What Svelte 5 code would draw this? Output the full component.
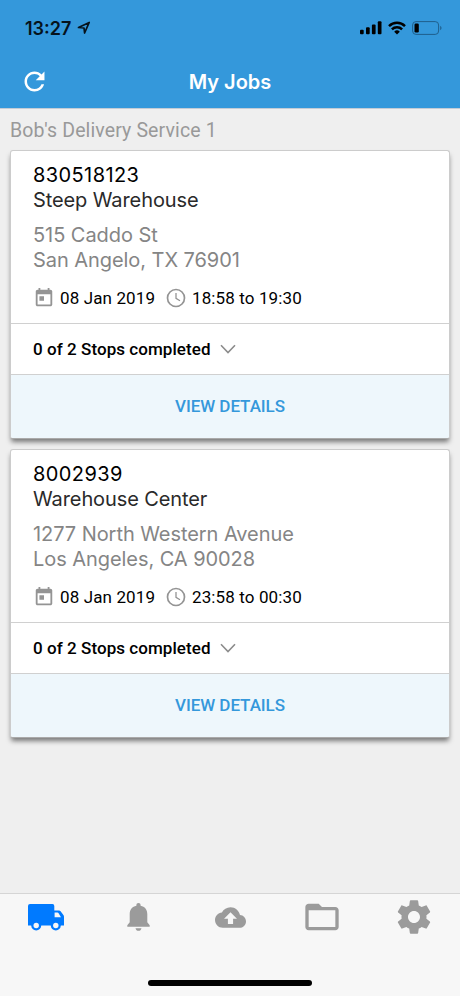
<script>
    export let company = "Bob's Delivery Service 1";

    export let jobs = [
        {
            id: '830518123',
            name: 'Steep Warehouse',
            street: '515 Caddo St',
            city: 'San Angelo, TX 76901',
            date: '08 Jan 2019',
            time: '18:58 to 19:30',
            stops: 2,
            done: 0
        },
        {
            id: '8002939',
            name: 'Warehouse Center',
            street: '1277 North Western Avenue',
            city: 'Los Angeles, CA 90028',
            date: '08 Jan 2019',
            time: '23:58 to 00:30',
            stops: 2,
            done: 0
        }
    ];

    let activeTab = 'jobs';
</script>

<div class="screen">
    <header>
        <div class="status">
            <span class="clock">13:27</span>
            <svg class="location" width="14" height="14" viewBox="0 0 14 14">
                <path d="M1.5 6.5 12.2 1.4 7.6 12 7 7Z" fill="none" stroke="#06131c" stroke-width="1.7" stroke-linejoin="round" />
            </svg>
            <div class="indicators">
                <svg width="22" height="14" viewBox="0 0 22 14">
                    <rect x="0" y="8.7" width="3.7" height="4.6" rx="1" />
                    <rect x="6" y="6.3" width="3.7" height="7" rx="1" />
                    <rect x="11.9" y="3.4" width="3.7" height="9.9" rx="1" />
                    <rect x="17.8" y="0.3" width="3.7" height="13" rx="1" />
                </svg>
                <svg width="18" height="14" viewBox="0 0 18 14">
                    <path d="M1 5.1a11.5 11.5 0 0 1 16 0M3.9 8.4a7.3 7.3 0 0 1 10.2 0" fill="none" stroke="#000" stroke-width="2.5" />
                    <path d="M9 13.4 6.2 10.7a4 4 0 0 1 5.6 0Z" />
                </svg>
                <svg width="30" height="14" viewBox="0 0 30 14">
                    <rect x="0.6" y="0.6" width="26" height="12.8" rx="3.4" fill="none" stroke="#1f5f8c" stroke-width="1" />
                    <rect x="2.5" y="2.5" width="4.3" height="9" rx="1.3" />
                    <path d="M28.2 4.8c1.8.7 1.8 3.7 0 4.4Z" fill="#1f5f8c" />
                </svg>
            </div>
        </div>
        <div class="navbar">
            <button class="refresh" aria-label="Refresh">
                <svg width="29" height="29" viewBox="0 0 512 512" fill="#fff">
                    <path d="M256 388c-72.597 0-132-59.405-132-132 0-72.601 59.403-132 132-132 36.3 0 69.299 15.4 92.406 39.601L278 234h154V80l-51.698 51.702C348.406 99.798 304.406 80 256 80c-96.797 0-176 79.203-176 176s78.094 176 176 176c81.045 0 148.287-54.134 169.401-128H378.85c-18.745 49.561-67.138 84-122.85 84z" />
                </svg>
            </button>
            <h1>My Jobs</h1>
        </div>
    </header>

    <main>
        <p class="company">{company}</p>
        {#each jobs as job (job.id)}
            <article class="card">
                <section class="info">
                    <div class="job-id">{job.id}</div>
                    <div class="job-name">{job.name}</div>
                    <address>
                        <div>{job.street}</div>
                        <div>{job.city}</div>
                    </address>
                    <div class="when">
                        <svg class="calendar" width="22" height="22" viewBox="0 0 24 24" fill="#949494">
                            <path d="M19 3h-1V1h-2v2H8V1H6v2H5c-1.11 0-1.99.9-1.99 2L3 19c0 1.1.89 2 2 2h14c1.1 0 2-.9 2-2V5c0-1.1-.9-2-2-2zm0 16H5V8h14v11zM7 10h5v5H7v-5z" />
                        </svg>
                        <span class="date">{job.date}</span>
                        <svg class="time-icon" width="20" height="20" viewBox="0 0 20 20" fill="none" stroke="#949494">
                            <circle cx="10" cy="10" r="8.5" stroke-width="1.7" />
                            <path d="M10 5v5.4l4 2.4" stroke-width="1.3" />
                        </svg>
                        <span class="time">{job.time}</span>
                    </div>
                </section>
                <section class="stops">
                    <span>{job.done} of {job.stops} Stops completed</span>
                    <svg width="16" height="10" viewBox="0 0 16 10" fill="none" stroke="#8c8c8c" stroke-width="1.6">
                        <path d="M1 1.2 8 8.5 15 1.2" />
                    </svg>
                </section>
                <button class="details">VIEW DETAILS</button>
            </article>
        {/each}
    </main>

    <nav>
        <button class:active={activeTab === 'jobs'} on:click={() => (activeTab = 'jobs')} aria-label="Jobs">
            <svg width="36" height="27" viewBox="0 0 36 27" fill="currentColor">
                <path fill-rule="evenodd" d="M2 0H24.5Q26.3 0 26.3 2V6.4H31Q32 6.4 32.6 7.2L35.4 11Q36 11.8 36 12.8V21.5H0V2Q0 0 2 0ZM26.6 8.6V13.2H33L30.6 9.3Q30.2 8.6 29.4 8.6Z" />
                <circle cx="8.2" cy="21.5" r="5" />
                <circle cx="27.8" cy="21.5" r="5" />
                <circle cx="8.2" cy="21.5" r="2.7" fill="#f7f7f7" />
                <circle cx="27.8" cy="21.5" r="2.7" fill="#f7f7f7" />
            </svg>
        </button>
        <button class:active={activeTab === 'alerts'} on:click={() => (activeTab = 'alerts')} aria-label="Alerts">
            <svg width="23" height="28" viewBox="0 0 23 28" fill="currentColor">
                <path d="M11.5 0c1.3 0 2.1.9 2.1 2.2v.5C17.8 3.5 20.3 6.8 20.3 11v8.2l2.4 3.1v1.4H.3v-1.4L2.7 19.2V11c0-4.2 2.5-7.5 6.7-8.3v-.5C9.4.9 10.2 0 11.5 0zM8.500 25.200h6c-.3 1.600-1.500 2.600-3 2.600s-2.700-1-3-2.600z" />
            </svg>
        </button>
        <button class:active={activeTab === 'upload'} on:click={() => (activeTab = 'upload')} aria-label="Upload">
            <svg width="31" height="31" viewBox="0 0 24 24" fill="currentColor">
                <path d="M19.35 10.04C18.67 6.59 15.64 4 12 4 9.11 4 6.6 5.64 5.35 8.04 2.34 8.36 0 10.91 0 14c0 3.31 2.69 6 6 6h13c2.76 0 5-2.24 5-5 0-2.64-2.05-4.78-4.65-4.96zM14 13v4h-4v-4H7l5-5 5 5h-3z" />
            </svg>
        </button>
        <button class:active={activeTab === 'files'} on:click={() => (activeTab = 'files')} aria-label="Files">
            <svg width="40" height="40" viewBox="0 0 24 24" fill="currentColor">
                <path d="M20 6h-8l-2-2H4c-1.1 0-1.99.9-1.99 2L2 18c0 1.1.9 2 2 2h16c1.1 0 2-.9 2-2V8c0-1.1-.9-2-2-2zm0 12H4V8h16v10z" />
            </svg>
        </button>
        <button class:active={activeTab === 'settings'} on:click={() => (activeTab = 'settings')} aria-label="Settings">
            <svg width="40" height="40" viewBox="0 0 24 24" fill="currentColor">
                <path d="M19.43 12.98c.04-.32.07-.64.07-.98s-.03-.66-.07-.98l2.11-1.65c.19-.15.24-.42.12-.64l-2-3.46c-.12-.22-.39-.3-.61-.22l-2.49 1c-.52-.4-1.08-.73-1.69-.98l-.38-2.65C14.46 2.18 14.25 2 14 2h-4c-.25 0-.46.18-.49.42l-.38 2.65c-.61.25-1.17.59-1.69.98l-2.49-1c-.23-.09-.49 0-.61.22l-2 3.46c-.13.22-.07.49.12.64l2.11 1.65c-.04.32-.07.65-.07.98s.03.66.07.98l-2.11 1.65c-.19.15-.24.42-.12.64l2 3.46c.12.22.39.3.61.22l2.49-1c.52.4 1.08.73 1.69.98l.38 2.65c.03.24.24.42.49.42h4c.25 0 .46-.18.49-.42l.38-2.65c.61-.25 1.17-.59 1.69-.98l2.49 1c.23.09.49 0 .61-.22l2-3.46c.12-.22.07-.49-.12-.64l-2.11-1.65zM12 15.6c-1.99 0-3.6-1.61-3.6-3.6s1.61-3.6 3.6-3.6 3.6 1.61 3.6 3.6-1.61 3.6-3.6 3.6z" />
            </svg>
        </button>
    </nav>
    <footer>
        <div class="home-bar"></div>
    </footer>
</div>

<style>
    :global(body) {
        margin: 0;
    }
    .screen {
        display: flex;
        flex-direction: column;
        width: 460px;
        height: 996px;
        background-color: #efefef;
        font-family: Roboto, sans-serif;
        overflow: hidden;
    }
    svg {
        display: block;
        flex-shrink: 0;
    }
    button {
        border: 0;
        padding: 0;
        background: none;
        font-family: inherit;
        cursor: pointer;
    }
    header {
        flex-shrink: 0;
        height: 109px;
        box-sizing: border-box;
        background-color: #3498db;
        border-bottom: 1px solid #c3ccd6;
    }
    .status {
        display: flex;
        align-items: center;
        height: 56px;
        padding: 0 18px 0 25px;
        box-sizing: border-box;
    }
    .clock {
        width: 52px;
        font-family: Inter, sans-serif;
        font-size: 18px;
        font-weight: 600;
        color: #06131c;
    }
    .indicators {
        display: flex;
        gap: 6px;
        margin-left: auto;
    }
    .navbar {
        display: grid;
        grid-template-columns: 60px 1fr 60px;
        align-items: center;
        height: 51px;
    }
    .refresh {
        margin-left: 20px;
    }
    h1 {
        margin: 0;
        text-align: center;
        font-family: Inter, sans-serif;
        font-size: 20px;
        font-weight: 600;
        color: #fff;
    }
    main {
        flex: 1;
        padding: 0 10px;
    }
    .company {
        margin: 0;
        height: 41px;
        line-height: 43px;
        font-size: 19.5px;
        letter-spacing: 0.12px;
        color: #999;
    }
    .card {
        height: 289px;
        margin-bottom: 10px;
        box-sizing: border-box;
        display: flex;
        flex-direction: column;
        background-color: #fff;
        border: 1px solid #ccc;
        border-bottom-color: #aaa;
        border-radius: 3px;
        box-shadow: 0 4px 5px -1px rgba(0, 0, 0, 0.5);
        overflow: hidden;
    }
    .info {
        height: 172px;
        padding: 12px 22px 0;
        box-sizing: border-box;
    }
    .job-id,
    .job-name {
        height: 25px;
        line-height: 25px;
        font-family: Inter, sans-serif;
        font-size: 20px;
        color: #000;
    }
    .job-id {
        letter-spacing: 0.4px;
    }
    .job-name {
        letter-spacing: -0.1px;
        color: #2a2a2a;
    }
    address {
        margin-top: 10px;
        font-family: Inter, sans-serif;
        font-size: 20px;
        font-style: normal;
        line-height: 24.5px;
        letter-spacing: -0.06px;
        color: #858585;
    }
    .when {
        display: flex;
        align-items: center;
        height: 22px;
        margin-top: 15px;
        font-size: 17px;
        letter-spacing: 0.12px;
        color: #000;
    }
    .date {
        width: 106px;
        margin-left: 5px;
    }
    .time {
        margin-left: 6px;
    }
    .stops {
        display: flex;
        align-items: center;
        gap: 9px;
        height: 51px;
        padding: 0 22px;
        box-sizing: border-box;
        border-top: 1px solid #d0d0d0;
        font-size: 17px;
        font-weight: 500;
        letter-spacing: 0.06px;
        color: #000;
    }
    .details {
        flex: 1;
        padding-bottom: 2px;
        border-top: 1px solid #d0d0d0;
        background-color: #eef7fc;
        font-size: 17px;
        font-weight: 500;
        letter-spacing: -0.05px;
        color: #3498db;
    }
    nav {
        flex-shrink: 0;
        display: grid;
        grid-template-columns: repeat(5, 1fr);
        height: 49px;
        padding-bottom: 2px;
        box-sizing: border-box;
        border-top: 1px solid #d5d5d5;
        background-color: #f7f7f7;
    }
    nav button {
        display: flex;
        align-items: center;
        justify-content: center;
        color: #9b9b9b;
    }
    nav button.active {
        color: #007aff;
    }
    footer {
        flex-shrink: 0;
        display: flex;
        justify-content: center;
        align-items: flex-end;
        height: 54px;
        padding-bottom: 10px;
        box-sizing: border-box;
        background-color: #f7f7f7;
    }
    .home-bar {
        width: 164px;
        height: 6px;
        border-radius: 3px;
        background-color: #000;
    }
</style>
